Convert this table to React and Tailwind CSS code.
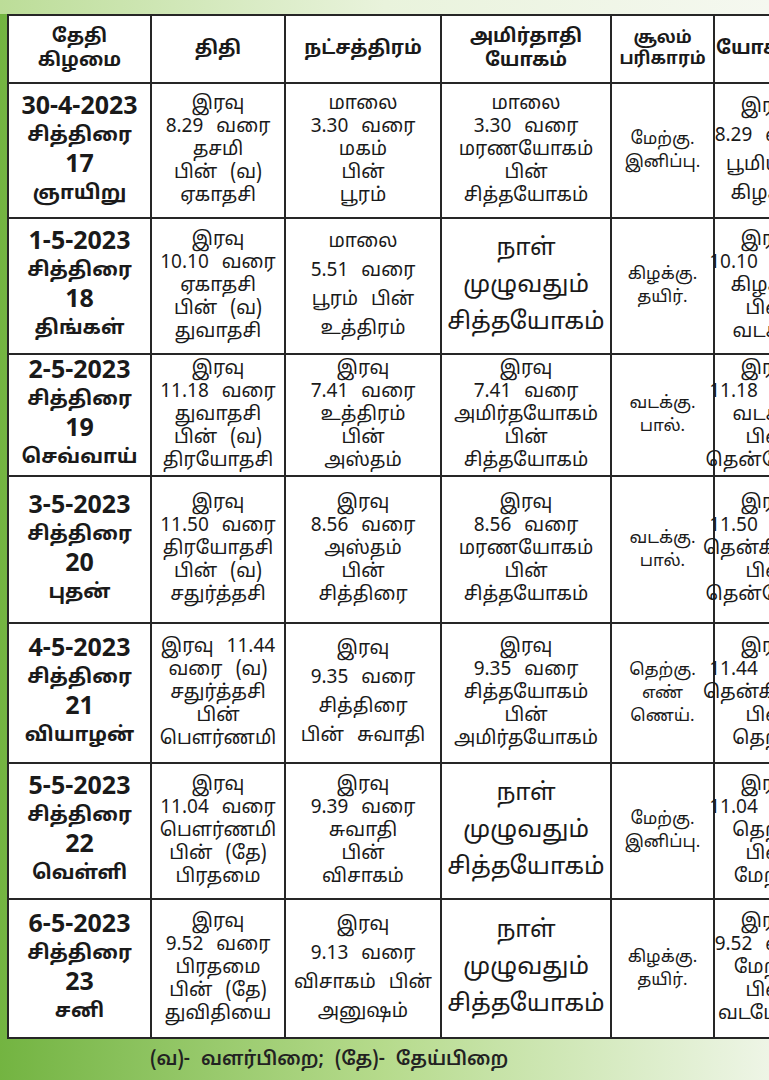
const rows = [
  {
    date: '30-4-2023', month: 'சித்திரை', day: '17', wd: 'ஞாயிறு', h: 'h-[135px]',
    thithi: ['இரவு', '8.29 வரை', 'தசமி', 'பின் (வ)', 'ஏகாதசி'],
    star: ['மாலை', '3.30 வரை', 'மகம்', 'பின்', 'பூரம்'],
    yogam: ['மாலை', '3.30 வரை', 'மரணயோகம்', 'பின்', 'சித்தயோகம்'],
    soolam: ['மேற்கு.', 'இனிப்பு.'],
    last: ['இரவு', '8.29 வரை', 'பூமியில்', 'கிழக்கு'],
  },
  {
    date: '1-5-2023', month: 'சித்திரை', day: '18', wd: 'திங்கள்', h: 'h-[136px]',
    thithi: ['இரவு', '10.10 வரை', 'ஏகாதசி', 'பின் (வ)', 'துவாதசி'],
    star: ['மாலை', '5.51 வரை', 'பூரம் பின்', 'உத்திரம்'],
    yogam: ['நாள்', 'முழுவதும்', 'சித்தயோகம்'],
    soolam: ['கிழக்கு.', 'தயிர்.'],
    last: ['இரவு', '10.10 வரை', 'கிழக்கு', 'பின்', 'வடக்கு'],
  },
  {
    date: '2-5-2023', month: 'சித்திரை', day: '19', wd: 'செவ்வாய்', h: 'h-[122px]',
    thithi: ['இரவு', '11.18 வரை', 'துவாதசி', 'பின் (வ)', 'திரயோதசி'],
    star: ['இரவு', '7.41 வரை', 'உத்திரம்', 'பின்', 'அஸ்தம்'],
    yogam: ['இரவு', '7.41 வரை', 'அமிர்தயோகம்', 'பின்', 'சித்தயோகம்'],
    soolam: ['வடக்கு.', 'பால்.'],
    last: ['இரவு', '11.18 வரை', 'வடக்கு', 'பின்', 'தென்மேற்கு'],
  },
  {
    date: '3-5-2023', month: 'சித்திரை', day: '20', wd: 'புதன்', h: 'h-[147px]',
    thithi: ['இரவு', '11.50 வரை', 'திரயோதசி', 'பின் (வ)', 'சதுர்த்தசி'],
    star: ['இரவு', '8.56 வரை', 'அஸ்தம்', 'பின்', 'சித்திரை'],
    yogam: ['இரவு', '8.56 வரை', 'மரணயோகம்', 'பின்', 'சித்தயோகம்'],
    soolam: ['வடக்கு.', 'பால்.'],
    last: ['இரவு', '11.50 வரை', 'தென்கிழக்கு', 'பின்', 'தென்மேற்கு'],
  },
  {
    date: '4-5-2023', month: 'சித்திரை', day: '21', wd: 'வியாழன்', h: 'h-[140px]',
    thithi: ['இரவு 11.44', 'வரை (வ)', 'சதுர்த்தசி', 'பின்', 'பௌர்ணமி'],
    star: ['இரவு', '9.35 வரை', 'சித்திரை', 'பின் சுவாதி'],
    yogam: ['இரவு', '9.35 வரை', 'சித்தயோகம்', 'பின்', 'அமிர்தயோகம்'],
    soolam: ['தெற்கு.', 'எண்', 'ணெய்.'],
    last: ['இரவு', '11.44 வரை', 'தென்கிழக்கு', 'பின்', 'தெற்கு'],
  },
  {
    date: '5-5-2023', month: 'சித்திரை', day: '22', wd: 'வெள்ளி', h: 'h-[136px]',
    thithi: ['இரவு', '11.04 வரை', 'பௌர்ணமி', 'பின் (தே)', 'பிரதமை'],
    star: ['இரவு', '9.39 வரை', 'சுவாதி', 'பின்', 'விசாகம்'],
    yogam: ['நாள்', 'முழுவதும்', 'சித்தயோகம்'],
    soolam: ['மேற்கு.', 'இனிப்பு.'],
    last: ['இரவு', '11.04 வரை', 'தெற்கு', 'பின்', 'மேற்கு'],
  },
  {
    date: '6-5-2023', month: 'சித்திரை', day: '23', wd: 'சனி', h: 'h-[139px]',
    thithi: ['இரவு', '9.52 வரை', 'பிரதமை', 'பின் (தே)', 'துவிதியை'],
    star: ['இரவு', '9.13 வரை', 'விசாகம் பின்', 'அனுஷம்'],
    yogam: ['நாள்', 'முழுவதும்', 'சித்தயோகம்'],
    soolam: ['கிழக்கு.', 'தயிர்.'],
    last: ['இரவு', '9.52 வரை', 'மேற்கு', 'பின்', 'வடமேற்கு'],
  },
];

const font = { fontFamily: '"Noto Sans Tamil", "Liberation Sans", "Noto Sans", sans-serif' };

// line spacing grows when a cell has fewer lines
function Lines({ lines, big }) {
  const lead =
    big ? 'text-[24px] leading-[37px]' :
    lines.length >= 5 ? 'text-[19px] leading-[23px] [word-spacing:8px]' :
    lines.length === 4 ? 'text-[19px] leading-[29px] [word-spacing:8px]' :
    'text-[19px] leading-[24px]';
  return (
    <div className={`flex flex-col items-center ${lead}`}>
      {lines.map((l, i) => (
        <span key={i} className="whitespace-nowrap">{l}</span>
      ))}
    </div>
  );
}

const cell = 'border-2 border-[#262626] text-center align-middle p-0';

export default function App() {
  return (
    <div
      className="w-[769px] h-[1080px] overflow-hidden bg-linear-to-r from-[#73b441] via-[#b6db8c] to-[#eef5e6] text-[#1a1a1a]"
      style={font}
    >
      <div className="h-[14px] bg-linear-to-r from-[#bcdd98] via-[#e9f3dc] to-[#f5f8f0]" />
      <div className="pl-[7px]">
        <table className="table-fixed border-collapse bg-white w-[812px]">
          <colgroup>
            <col className="w-[143px]" />
            <col className="w-[134px]" />
            <col className="w-[156px]" />
            <col className="w-[170px]" />
            <col className="w-[103px]" />
            <col className="w-[106px]" />
          </colgroup>
          <thead>
            <tr className="h-[68px] font-bold text-[19px] leading-[24px]">
              <th className={cell}>தேதி<br />கிழமை</th>
              <th className={cell}>திதி</th>
              <th className={cell}>நட்சத்திரம்</th>
              <th className={cell}>அமிர்தாதி<br />யோகம்</th>
              <th className={`${cell} text-[17px] leading-[21px]`}>சூலம்<br />பரிகாரம்</th>
              <th className={cell}>யோகினி</th>
            </tr>
          </thead>
          <tbody>
            {rows.map((r) => (
              <tr key={r.date} className={r.h}>
                <td className={`${cell} font-bold`}>
                  <div className="flex flex-col items-center leading-[29px]">
                    <span className="text-[25px]">{r.date}</span>
                    <span className="text-[20px]">{r.month}</span>
                    <span className="text-[25px]">{r.day}</span>
                    <span className="text-[20px]">{r.wd}</span>
                  </div>
                </td>
                <td className={cell}><Lines lines={r.thithi} /></td>
                <td className={cell}><Lines lines={r.star} /></td>
                <td className={cell}><Lines lines={r.yogam} big={r.yogam.length === 3} /></td>
                <td className={cell}>
                  <div className="flex flex-col items-center text-[17px] leading-[23px]">
                    {r.soolam.map((s, i) => <span key={i}>{s}</span>)}
                  </div>
                </td>
                <td className={cell}><Lines lines={r.last} /></td>
              </tr>
            ))}
          </tbody>
        </table>
      </div>
      <div className="pl-[150px] pt-[7px] text-[19px] font-semibold text-[#222] [word-spacing:6px]">
        (வ)- வளர்பிறை; (தே)- தேய்பிறை
      </div>
    </div>
  );
}
